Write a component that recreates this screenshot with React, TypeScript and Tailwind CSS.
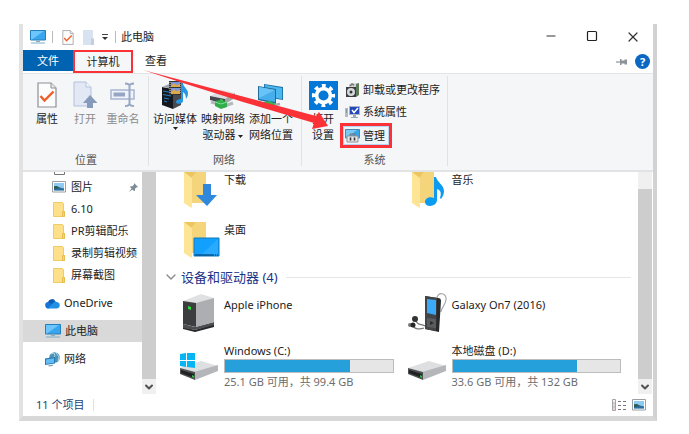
import React from 'react';
import { ChevronDown, Minus, Square, X } from 'lucide-react';

const App: React.FC = () => {
  return (
    <div className="pt-6 pl-[19px] pr-8 pb-3 bg-white text-[11px] leading-4 text-[#222] font-['Noto_Sans','Noto_Sans_CJK_SC',sans-serif]">
      <div className="border-x-4 border-b-[5px] border-l-[#e2e2e2] border-r-[#d2d2d2] border-b-[#d8d8d8] bg-white">
        <TitleBar />
        <TabBar />
        <Ribbon />
        <div className="flex">
          <Sidebar />
          <Scrollbar />
          <Content />
          <Scrollbar track />
        </div>
        <StatusBar />
      </div>
    </div>
  );
};

const TitleBar = () => (
  <header className="flex items-center h-[26px] pl-[7px]">
    <PcIcon />
    <span className="w-px h-3 ml-1.5 bg-[#bbb]" />
    <button aria-label="属性" className="ml-[9px]">
      <DocCheckIcon className="w-3 h-[15px]" />
    </button>
    <button aria-label="新建文件夹" className="ml-2">
      <svg className="w-[13px] h-[15px]" viewBox="0 0 13 15">
        <path d="M1 0h10v8l1 1v6H1z" fill="#d8e2f0" />
        <path d="M9 8l3 1v6H9z" fill="#c0cfe4" />
      </svg>
    </button>
    <button aria-label="自定义快速访问工具栏" className="ml-1.5">
      <svg className="w-2 h-2" viewBox="0 0 8 8">
        <path d="M1 1.5h6" stroke="#444" />
        <path d="M1 4h6L4 7z" fill="#333" />
      </svg>
    </button>
    <span className="w-px h-3 ml-1.5 bg-[#bbb]" />
    <h1 className="ml-[5px]">此电脑</h1>
    <div className="flex ml-auto">
      <button aria-label="最小化" className="flex justify-center w-[41px]">
        <Minus className="w-3.5 h-3.5 text-[#333]" strokeWidth={1.8} />
      </button>
      <button aria-label="最大化" className="flex justify-center w-[41px]">
        <Square className="w-3 h-3.5 text-[#222]" strokeWidth={2.4} />
      </button>
      <button aria-label="关闭" className="flex justify-center w-[41px]">
        <X className="w-4 h-4 text-[#333]" strokeWidth={1.8} />
      </button>
    </div>
  </header>
);

const TabBar = () => (
  <nav className="flex h-6 border-b border-[#e3e4e6]">
    <button className="w-[50px] h-[21px] bg-[#0063b1] text-white">文件</button>
    <button className="w-[60px] h-[23px] border-2 border-[#fa3238] bg-[#f5f6f7]">计算机</button>
    <button className="w-[46px] h-[22px]">查看</button>
    <div className="flex items-center gap-[7px] ml-auto pr-[3px]">
      <button aria-label="固定功能区">
        <svg className="w-3 h-2" viewBox="0 0 12 8">
          <path d="M0 4h5" stroke="#8b949b" strokeWidth="1.2" />
          <path d="M4 1h1.5v1.5h3V1.5H11v5H8.500V5.500h-3V7H4z" fill="#8b949b" />
        </svg>
      </button>
      <button aria-label="帮助" className="w-[15px] h-[15px] rounded-full bg-[#0a68c4] text-white font-bold leading-[15px]">?</button>
    </div>
  </nav>
);

const Ribbon = () => (
  <section className="relative flex h-[98px] border-b-2 border-[#e2e3e4] bg-[#f5f6f8]">
    <Group title="位置" className="w-[126px] pl-[5px]">
      <BigButton className="w-[38px]" icon={<DocCheckIcon className="w-5 h-[26px]" />}>属性</BigButton>
      <BigButton className="w-[38px] text-[#8b8b8b]" icon={<OpenIcon />}>打开</BigButton>
      <BigButton className="w-[38px] text-[#8b8b8b]" icon={<RenameIcon />}>重命名</BigButton>
    </Group>
    <Group title="网络" className="w-[153px] pl-[2px]">
      <BigButton className="w-12" icon={<MediaIcon />}>
        访问媒体
        <Caret className="block mx-auto" />
      </BigButton>
      <BigButton className="w-12" icon={<MapDriveIcon />}>
        映射网络
        <br />
        驱动器 <Caret className="inline-block" />
      </BigButton>
      <BigButton className="w-12" icon={<NetPlaceIcon />}>
        添加一个
        <br />
        网络位置
      </BigButton>
    </Group>
    <Group title="系统" className="w-[146px] pl-1">
      <BigButton className="w-[34px]" icon={<SettingsIcon />}>
        打开
        <br />
        设置
      </BigButton>
      <div className="flex flex-col items-start">
        <button className="flex items-center gap-[3px] h-[22px] pl-[5px]">
          <UninstallIcon />
          卸载或更改程序
        </button>
        <button className="flex items-center gap-[3px] h-[22px] pl-[5px]">
          <SystemIcon />
          系统属性
        </button>
        <button className="flex items-center gap-[3px] h-[25px] pl-0.5 pr-1 border-[3px] border-[#fa3238] bg-[#eff4f9] inset-ring inset-ring-[#b5d5f2]">
          <ManageIcon />
          管理
        </button>
      </div>
    </Group>
    {/* Arrow from the tab to the manage button */}
    <svg className="absolute left-[120px] -top-1 w-[186px] h-[60px] pointer-events-none" viewBox="0 0 186 60">
      <path d="M0 0L173 46L176 42L185 56L169 59L171 53L100 32L40 13z" fill="#fa3238" />
    </svg>
  </section>
);

const Group = ({ title, className, children }: { title: string, className: string, children?: React.ReactNode }) => (
  <div className={`flex flex-col justify-between pt-[5px] pb-0.5 shrink-0 ${className} relative after:absolute after:right-0 after:top-0.5 after:bottom-1 after:w-px after:bg-[#e0e2e4]`}>
    <div className="flex items-start">{children}</div>
    <div className="pr-[5px] text-center text-[#555]">{title}</div>
  </div>
);

const BigButton = ({ icon, className, children }: { icon: React.ReactNode, className: string, children?: React.ReactNode }) => (
  <button className={`shrink-0 whitespace-nowrap ${className}`}>
    <span className="flex items-center justify-center h-8">{icon}</span>
    <span className="block">{children}</span>
  </button>
);

const FOLDERS = ['6.10', 'PR剪辑配乐', '录制剪辑视频', '屏幕截图'];

const Sidebar = () => (
  <aside className="flex flex-col w-[119px] shrink-0 whitespace-nowrap">
    <svg className="w-3 h-1 ml-[31px] shrink-0" viewBox="0 0 12 4">
      <path d="M.5 0v2.500h10V0" fill="none" stroke="#777" />
    </svg>
    <a href="#" className="flex items-center gap-[5px] h-[22px] pl-[29px] pr-1">
      <PictureIcon />
      图片
      <svg className="w-[9px] h-[9px] ml-auto" viewBox="0 0 9 9">
        <path d="M5 0l4 4-1 .5-.500-.2-1.500 1.500v2L5 8 1 4l.5-.8h2L5 1.500zM2.500 5.500L0 9l3.500-2.500z" fill="#7d8b96" />
      </svg>
    </a>
    {FOLDERS.map((name) => (
      <a key={name} href="#" className="flex items-center gap-[5px] h-[22px] pl-[30px]">
        <svg className="w-[13px] h-[15px]" viewBox="0 0 13 15">
          <path d="M.5.5h9l1 1v8h1v5H.5z" fill="#fee08a" stroke="#efcb66" />
          <path d="M9.500 9.500h2v5h-2z" fill="#f8d470" stroke="#e5bd50" />
        </svg>
        {name}
      </a>
    ))}
    <div className="flex flex-col gap-1.5 pt-1.5">
      <a href="#" className="flex items-center gap-1 h-[22px] pl-[22px]">
        <svg className="w-[15px] h-[11px]" viewBox="0 0 15 11">
          <path d="M3 4a4 4 0 0 1 7.500-.5L12 7 4 10z" fill="#0d5cb8" />
          <path d="M3 4l6 3-5 3.500a3.200 3.200 0 0 1-1-6.500z" fill="#1374d4" />
          <path d="M8 5a3.500 3.500 0 0 1 4-1 3.300 3.300 0 0 1 0 6.500H3L8 5z" fill="#1f90e4" />
        </svg>
        OneDrive
      </a>
      <a href="#" className="flex items-center gap-1 h-[22px] pl-[22px] bg-[#d9d9d9]">
        <PcIcon />
        此电脑
      </a>
      <a href="#" className="flex items-center gap-1 h-[22px] pl-[22px]">
        <svg className="w-[15px] h-[15px]" viewBox="0 0 15 15">
          <circle cx="9.500" cy="5.500" r="5.300" fill="#4f93b4" />
          <path d="M6 2l3-1 1 3-2 2M11 1l3 4-1 4" fill="none" stroke="#a8d3e4" />
          <path d="M0 6.500l10-1.500v6.500L0 13z" fill="#2477b4" />
          <path d="M1 7.500l8-1.300v4.500L1 12z" fill="#63bdf4" />
          <path d="M3 13.500l5-.8v1L4 14.500z" fill="#7295aa" />
        </svg>
        网络
      </a>
    </div>
  </aside>
);

const Scrollbar = ({ track }: { track?: boolean }) => (
  <div className={`flex flex-col shrink-0 bg-[#f0f0f0] ${track ? 'w-[14px] pt-[17px] mr-px' : 'w-[14px]'}`}>
    <div className="flex-1 bg-[#cdcdcd]" />
    <button aria-label="向下滚动" className="flex items-center justify-center h-[15px]">
      <ChevronDown className="w-3 h-3 text-[#505050]" strokeWidth={4} />
    </button>
  </div>
);

const Content = () => (
  <main className="flex-1 min-w-0 h-[222px] whitespace-nowrap">
    <div className="grid grid-cols-2 pl-[27px]">
      <Item name="下载" icon={<FolderIcon kind="download" />} />
      <Item name="音乐" icon={<FolderIcon kind="music" />} />
      <Item name="桌面" icon={<FolderIcon kind="desktop" />} />
    </div>
    <h2 className="flex items-center gap-0.5 h-[14px] -mt-0.5 pl-[7px] pr-[7px] text-[13px] text-[#1e3287]">
      <ChevronDown className="w-4 h-4 text-[#888]" strokeWidth={2} />
      设备和驱动器 (4)
      <span className="flex-1 h-px ml-1.5 bg-[#e6e6e6]" />
    </h2>
    <div className="grid grid-cols-2 pl-[27px] pt-[13px]">
      <Item name="Apple iPhone" icon={<TowerIcon />} />
      <Item name="Galaxy On7 (2016)" icon={<PlayerIcon />} />
    </div>
    <div className="grid grid-cols-2 pl-[27px] -mt-1">
      <Item name="Windows (C:)" icon={<DriveIcon windows />} used={74.7} detail="25.1 GB 可用，共 99.4 GB" />
      <Item name="本地磁盘 (D:)" icon={<DriveIcon />} used={74.6} detail="33.6 GB 可用，共 132 GB" />
    </div>
  </main>
);

interface ItemProps {
  name: string;
  icon: React.ReactNode;
  used?: number;
  detail?: string;
}

const Item = ({ name, icon, used, detail }: ItemProps) => (
  <div className="flex h-[50px] min-w-0">
    <div className="w-[41px] shrink-0">{icon}</div>
    <div className="flex-1 min-w-0 pr-[17px]">
      <div>{name}</div>
      {detail && (
        <>
          <div className="h-[14px] border border-[#bcbcbc] bg-[#e6e6e6]">
            <div className="h-full bg-[#26a0da]" style={{ width: `${used}%` }} />
          </div>
          <div className="pt-px text-[#6d6d6d]">{detail}</div>
        </>
      )}
    </div>
  </div>
);

const StatusBar = () => (
  <footer className="flex items-center h-[22px] pl-[13px] pr-[7px] text-[#25426e]">
    <span>11 个项目</span>
    <span className="w-px h-3 ml-[9px] bg-[#e2e2e2]" />
    <div className="flex gap-[5px] ml-auto">
      <button aria-label="详细信息">
        <svg className="w-[15px] h-3" viewBox="0 0 15 12">
          <path d="M.5.5h3v11h-3zM.5 4h3M.5 8h3" fill="#f5f5f5" stroke="#a5a5a5" />
          <path d="M2 5.500v1M2 9.500v1" stroke="#c9745f" />
          <path d="M6 2.500h3m2 0h3M6 6.500h3m2 0h3M6 10.500h3m2 0h3" stroke="#777" />
        </svg>
      </button>
      <button aria-label="大图标">
        <PictureIcon />
      </button>
    </div>
  </footer>
);

/* Icons */

const Caret = ({ className }: { className: string }) => (
  <svg className={`w-[5px] h-[3px] ${className}`} viewBox="0 0 5 3">
    <path d="M0 0h5L2.500 3z" fill="#222" />
  </svg>
);

const PcIcon = () => (
  <svg className="w-4 h-[14px]" viewBox="0 0 16 14">
    <path d="M.5.5h15v9.500H.5z" fill="#3aa4ec" stroke="#2380be" />
    <path d="M1 1h13L2 9.500H1z" fill="#6cc5fb" />
    <path d="M6 10.500h4v1.500H6z" fill="#93adbd" />
    <path d="M1 13h14" stroke="#7faccb" />
  </svg>
);

const DocCheckIcon = ({ className }: { className: string }) => (
  <svg className={className} viewBox="0 0 20 26">
    <path d="M1 1h13l5 5v19H1z" fill="#fcfcfd" stroke="#8b9095" strokeWidth="1.200" />
    <path d="M14 1v5h5" fill="#e8eaed" stroke="#8b9095" />
    <path d="M3.500 14l4 4.500 9-9" fill="none" stroke="#ee5f28" strokeWidth="2.400" />
  </svg>
);

const OpenIcon = () => (
  <svg className="w-[26px] h-7" viewBox="0 0 26 28">
    <path d="M2 1h12l5 5v19H2z" fill="#e2e8f4" stroke="#b5c2da" />
    <path d="M14 1v5h5" fill="#f4f6fb" stroke="#b5c2da" />
    <path d="M18 14l7.500 8H21v5h-6v-5h-4z" fill="#869abb" />
  </svg>
);

const RenameIcon = () => (
  <svg className="w-[26px] h-7" viewBox="0 0 26 28">
    <path d="M1 9h23v9H1z" fill="#eef2fa" stroke="#a9b7d0" strokeWidth="1.500" />
    <path d="M3.500 11.500H15v4H3.500z" fill="#94a6c4" />
    <path d="M15 2.500c3 0 4.500.5 4.500 2.500v17c0 2-1.500 3-4.500 3M24 2.500c-3 0-4.500.5-4.500 2.500v17c0 2 1.500 3 4.500 3" fill="none" stroke="#98a8c4" strokeWidth="2" />
  </svg>
);

const MediaIcon = () => (
  <svg className="w-7 h-[30px]" viewBox="0 0 28 30">
    <path d="M1 7l11 2v20L1 25z" fill="#15191f" />
    <path d="M1 7l7-3 12 3-8 2z" fill="#a2a7ab" />
    <path d="M12 9l8-2v18l-8 4z" fill="#46494d" />
    <path d="M2 11l8 1.500M2 14.500l8 1.500M3 18l5 1M3 21l3 1" stroke="#2780c5" />
    <path d="M8 1h13v14H8z" fill="#333" />
    <path d="M10 2h9v5h-9z" fill="#7795e0" />
    <path d="M10 8h9v6h-9z" fill="#7795e0" />
    <path d="M10 6l3-3 2 2 4-1v3h-9zM10 12l3-3 2 2 4-1v4h-9z" fill="#dca84d" />
    <path d="M9 2v12M20 2v12" stroke="#ddd" strokeDasharray="1 1" />
    <path d="M20 3h2c0 4 5 6 5 10 0 3-1 4-2 6 0-5-2-6-3-7v9c0 3-7 4-7 1 0-2 3-3 5-3z" fill="#2796e5" />
  </svg>
);

const MapDriveIcon = () => (
  <svg className="w-[30px] h-[30px]" viewBox="0 0 30 30">
    <path d="M2 16l12-6 13 3-9 6z" fill="#dcdddf" />
    <path d="M2 16l15 3v5L2 20z" fill="#45494c" />
    <path d="M17 19l10-6v5l-10 6z" fill="#a3a6a8" />
    <path d="M12 20l3 1" stroke="#39dc54" strokeWidth="2" />
    <path d="M3 22l14 4 8-3" fill="none" stroke="#b5b9bc" strokeWidth="3" />
    <path d="M7 21l5-1 7 2v5l-6 2-6-3z" fill="#32ad4c" />
    <path d="M7 22l6 2 6-2" fill="none" stroke="#7ce08f" />
  </svg>
);

const NetPlaceIcon = () => (
  <svg className="w-[26px] h-[26px]" viewBox="0 0 26 26">
    <path d="M6 2l19 3v13L6 15z" fill="#2276a8" />
    <path d="M7 3l17 3v11L7 14z" fill="#4bb8ef" />
    <path d="M0 4l18 3v15L0 18z" fill="#246b99" />
    <path d="M1 5l16 3v12L1 17z" fill="#46aeea" />
    <path d="M1 5l16 3L1 16z" fill="#68c3f7" />
    <path d="M4 22l8 2 10-2" fill="none" stroke="#a9adb0" strokeWidth="2.500" />
    <path d="M6 20l6-1 5 3-1 3-5 1-5-3z" fill="#36b54a" />
  </svg>
);

const SettingsIcon = () => (
  <svg className="w-[29px] h-[29px] shrink-0" viewBox="0 0 29 29">
    <path d="M0 0h29v29H0z" fill="#0578d7" />
    <circle cx="14.500" cy="14.500" r="6.900" fill="none" stroke="#fff" strokeWidth="3.600" />
    <circle cx="14.500" cy="14.500" r="9.700" fill="none" stroke="#fff" strokeWidth="3.800" strokeDasharray="3.800 3.818" strokeDashoffset="1.900" />
  </svg>
);

const UninstallIcon = () => (
  <svg className="w-[15px] h-[15px]" viewBox="0 0 15 15">
    <path d="M4 1l9-1v12l-3 1H4z" fill="#d1d3cf" />
    <path d="M11 1l3-1v12l-3 2z" fill="#5f7b57" />
    <path d="M1 4h10v10H1z" fill="#3a3d40" />
    <circle cx="6" cy="9" r="4" fill="#d6dadd" />
    <circle cx="6" cy="9" r="1.500" fill="#333" />
    <path d="M5 3l2-2 2 1" fill="none" stroke="#777" strokeWidth="1.500" />
  </svg>
);

const SystemIcon = () => (
  <svg className="w-[15px] h-[14px]" viewBox="0 0 15 14">
    <path d="M0 3h3v9H0z" fill="#b6bbc1" />
    <path d="M1 5h1M1 7h1" stroke="#577" />
    <path d="M4.500 1.500h10v8h-10z" fill="#2548b9" stroke="#a9b4c7" />
    <path d="M7 5l2 2.500 4-4.500" fill="none" stroke="#fff" strokeWidth="1.500" />
    <path d="M8 10h3v2H8zM6 12h7v1H6z" fill="#9ea7b5" />
  </svg>
);

const ManageIcon = () => (
  <svg className="w-[15px] h-[14px]" viewBox="0 0 15 14">
    <path d="M.5.5h14V9H.5z" fill="#3ca3e5" stroke="#4389b4" />
    <path d="M1 1h11L2 8.500H1z" fill="#79c9f4" />
    <path d="M5 7V5h5v2" fill="none" stroke="#777" />
    <path d="M2 7h11v6H2z" fill="#e5e7e9" stroke="#8c9197" />
    <path d="M5.500 8.500v3M9.500 8.500v3" stroke="#333" strokeWidth="1.600" />
  </svg>
);

const PictureIcon = () => (
  <svg className="w-[14px] h-3" viewBox="0 0 14 12">
    <path d="M.5.5h13v10.500H.5z" fill="#fff" stroke="#9a9fa5" />
    <path d="M2 2h10v7.500H2z" fill="#8ecbf2" />
    <path d="M2 5l4 1 6 1.500v2H2z" fill="#2c6e9c" />
    <path d="M2 5.500l3-.5 3 2-6 1z" fill="#315a50" />
  </svg>
);

const FolderIcon = ({ kind }: { kind: 'download' | 'music' | 'desktop' }) => (
  <svg className="w-[37px] h-[37px]" viewBox="0 0 37 37">
    <path d="M1 0h22v31H8z" fill="#ecc55f" />
    <path d="M9 5l4-5h10v31H9z" fill="#f5d57b" />
    <path d="M1 0l8 6v28c0 2-1 2-2 1L1 31z" fill="#fee495" />
    {kind === 'download' && (
      <path d="M20 12h8v11h6L24 34 13 23h7z" fill="#2f88dc" />
    )}
    {kind === 'music' && (
      <path d="M23 5h2c1 5 8 8 8 14 0 3-1 5-3 8l-1-1c2-6 0-8-3-9v11c0 7-12 8-12 2 0-4 5-6 9-4z" fill="#0b9bf0" />
    )}
    {kind === 'desktop' && (
      <>
        <path d="M11 16h25v18H11z" fill="#12a0ff" stroke="#1279b8" />
        <path d="M35 17v16H18z" fill="#28aaff" />
        <path d="M12 33h19m1 0h1m1 0h1" stroke="#07568d" strokeWidth="1.500" />
      </>
    )}
  </svg>
);

const TowerIcon = () => (
  <svg className="w-[34px] h-10 -mt-1" viewBox="0 0 34 40">
    <path d="M0 34l12 3 19-6v3l-19 5L0 36z" fill="#26282a" />
    <path d="M0 31l12 3 19-5v3l-19 5L0 35z" fill="#4c4f51" />
    <path d="M0 8L18 1l13 4-18 6z" fill="#e0e1e3" />
    <path d="M13 10l18-5v24l-18 5z" fill="#acaeb1" />
    <path d="M0 8l13 2v24L0 31z" fill="#3b3d3f" />
    <path d="M5 13l3 1v3l-3-1z" fill="#2bd838" />
  </svg>
);

const PlayerIcon = () => (
  <svg className="w-10 h-10 -ml-1 -mt-1" viewBox="0 0 40 40">
    <path d="M30 5c0-6 10-6 9 2-1 6-5 8-5 12" fill="none" stroke="#a5a7aa" strokeWidth="1.200" />
    <path d="M18 3l13 2c2 0 3 1 3 3l-2 31-14-3z" fill="#27292b" />
    <path d="M18 3l12 2-1 33-11-2z" fill="#424547" />
    <path d="M20 6l9 1v15l-9-2z" fill="#3ba9f5" />
    <path d="M20 25l9 1v9l-9-1z" fill="#5a5d60" />
    <path d="M23 28l4 2-4 2z" fill="#292b2d" />
    <path d="M8 26c3 8 6 4 10 7M5 33c5 4 7 3 12 2" fill="none" stroke="#777" strokeWidth="1.200" />
    <circle cx="8" cy="26" r="3" fill="#333" />
    <circle cx="3" cy="32" r="2" fill="#777" />
    <circle cx="6" cy="32" r="2.500" fill="#262626" />
  </svg>
);

const DriveIcon = ({ windows }: { windows?: boolean }) => (
  <svg className="w-10 h-7 -ml-1 mt-2.5" viewBox="0 0 40 28">
    <path d="M1 15L22 8l17 5-24 8z" fill="#dedfe1" />
    <path d="M15 19l24-7v6l-23 9z" fill="#b4b6b9" />
    <path d="M1 15l15 4v8L1 21z" fill="#4e5052" />
    <path d="M2 17l13 4v4L2 20z" fill="#1f2122" />
    <path d="M13 22l2 1v2l-2-1z" fill="#20cf32" />
    {windows && (
      <path d="M1 1l6-1v7H1zM8 0l8-1v8H8zM1 8h6v6l-6-1zM8 8h8v7l-8-1z" fill="#06b5f3" />
    )}
  </svg>
);

export default App;
